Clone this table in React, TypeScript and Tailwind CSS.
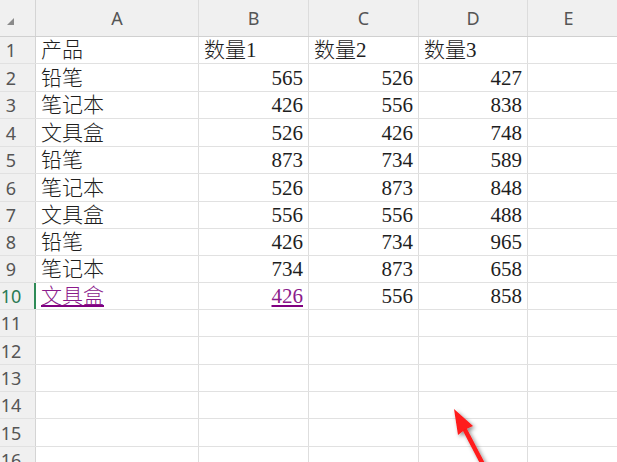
import React from 'react';

const rows: { a: string; b: string; c: string; d: string }[] = [
  { a: '产品', b: '数量1', c: '数量2', d: '数量3' },
  { a: '铅笔', b: '565', c: '526', d: '427' },
  { a: '笔记本', b: '426', c: '556', d: '838' },
  { a: '文具盒', b: '526', c: '426', d: '748' },
  { a: '铅笔', b: '873', c: '734', d: '589' },
  { a: '笔记本', b: '526', c: '873', d: '848' },
  { a: '文具盒', b: '556', c: '556', d: '488' },
  { a: '铅笔', b: '426', c: '734', d: '965' },
  { a: '笔记本', b: '734', c: '873', d: '658' },
  { a: '文具盒', b: '426', c: '556', d: '858' },
];

// row pitch in the sheet is ~27.3px, so mix 27 and 28
const tall = [false, true, false, true, false, true, false, false, false, false, false, true, false, false, true, false];

const cellFont = { fontFamily: '"Liberation Serif", "Noto Sans CJK SC", serif' };

function Cell({ text, align, link, w }: { text?: string; align: 'left' | 'right'; link?: boolean; w: string }) {
  const isNum = text !== undefined && /^\d+$/.test(text);
  const right = align === 'right' && isNum;
  return (
    <div
      className={`${w} shrink-0 h-full border-r border-[#dedede] flex items-end overflow-visible whitespace-nowrap ${right ? 'justify-end pr-[5px]' : 'justify-start pl-[5px]'}`}
      style={cellFont}
    >
      {text && (
        <span
          className={`${isNum ? 'text-[21px]' : 'text-[21px]'} leading-[25px] font-light ${link ? 'text-[#8b1a8b] underline decoration-2 underline-offset-[2px] decoration-[#800080]' : 'text-[#1e1e1e]'}`}
        >
          {text}
        </span>
      )}
    </div>
  );
}

export default function App() {
  return (
    <div className="relative w-[617px] h-[462px] overflow-hidden bg-white">
      {/* column header */}
      <div className="flex h-[37px] bg-[#f0f0f0] border-b border-[#d0d0d0]" style={{ fontFamily: '"Noto Sans", "Liberation Sans", sans-serif' }}>
        <div className="w-[36px] shrink-0 h-full border-r border-[#d4d4d4] relative">
          <svg className="absolute left-[7px] top-[18px]" width="8" height="8" viewBox="0 0 8 8">
            <polygon points="7,0 7,7 0,7" fill="#8a8a8a" />
          </svg>
        </div>
        {[
          { l: 'A', w: 'w-[163px]' },
          { l: 'B', w: 'w-[110px]' },
          { l: 'C', w: 'w-[110px]' },
          { l: 'D', w: 'w-[109px]' },
        ].map(c => (
          <div key={c.l} className={`${c.w} shrink-0 h-full border-r border-[#dcdcdc] flex items-center justify-center text-[18px] text-[#555]`}>
            {c.l}
          </div>
        ))}
        <div className="flex-1 h-full flex items-center justify-center text-[18px] text-[#555] pr-[8px]">E</div>
      </div>

      {tall.map((t, i) => {
        const r = rows[i];
        const active = i === 9;
        return (
          <div key={i} className={`flex ${t ? 'h-[28px]' : 'h-[27px]'} border-b border-[#e1e1e1]`}>
            <div
              className={`w-[36px] shrink-0 h-full bg-[#f0f0f0] border-r ${active ? 'border-r-2 border-[#2e8b57]' : 'border-[#d4d4d4]'} flex items-center`}
              style={{ fontFamily: '"Noto Sans", "Liberation Sans", sans-serif' }}
            >
              <span className={`w-[22px] text-center text-[18px] leading-none ${active ? 'text-[#2a7a55]' : 'text-[#555]'}`}>{i + 1}</span>
            </div>
            <Cell w="w-[163px]" align="left" text={r?.a} link={active} />
            <Cell w="w-[110px]" align="right" text={r?.b} link={active} />
            <Cell w="w-[110px]" align="right" text={r?.c} />
            <Cell w="w-[109px]" align="right" text={r?.d} />
            <div className="flex-1 h-full" />
          </div>
        );
      })}

      {/* red arrow annotation */}
      <svg className="absolute left-0 top-0 pointer-events-none" width="617" height="462" viewBox="0 0 617 462">
        <defs>
          <filter id="sh" x="-50%" y="-50%" width="200%" height="200%">
            <feDropShadow dx="2" dy="2" stdDeviation="2" floodColor="#000" floodOpacity="0.45" />
          </filter>
        </defs>
        <g filter="url(#sh)">
          <line x1="464" y1="428" x2="488" y2="474" stroke="#ff1a1a" strokeWidth="4.5" />
          <polygon points="454,409 473,426 465,429.5 458,435" fill="#ff1a1a" />
        </g>
      </svg>
    </div>
  );
}
